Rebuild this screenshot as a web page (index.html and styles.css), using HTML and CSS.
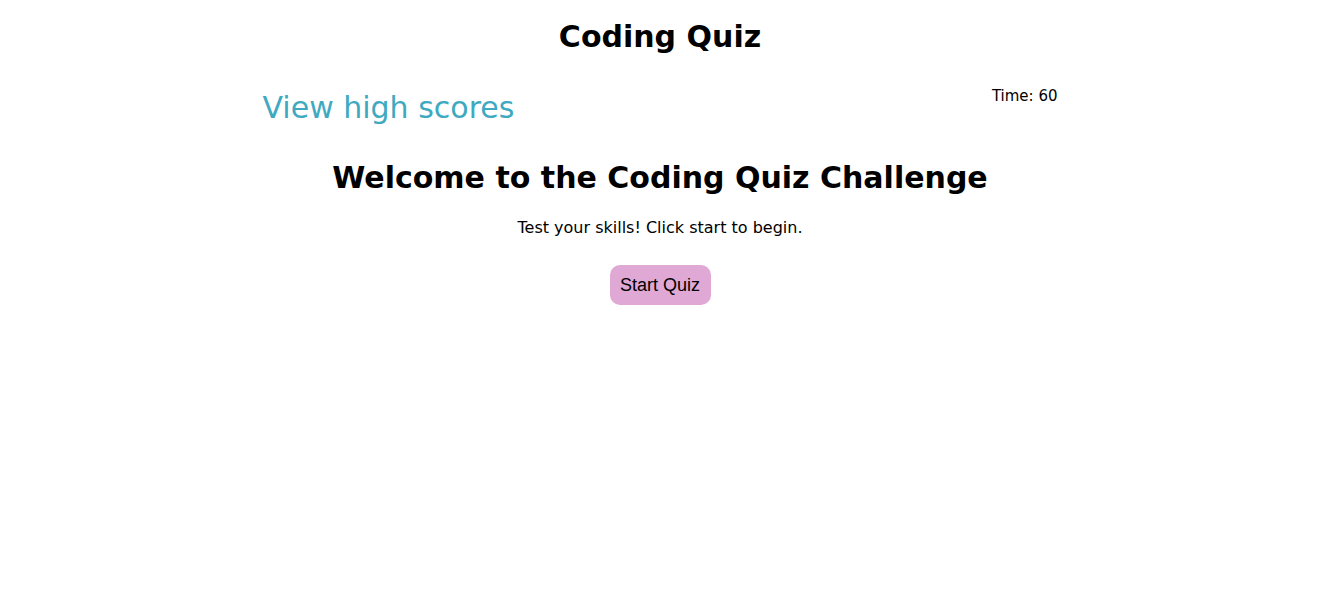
FILE: index.html
```html
<!DOCTYPE html>
<html lang="en">
<head>
<meta charset="utf-8">
<title>Coding Quiz</title>
<link rel="stylesheet" href="styles.css">
</head>
<body>
<h1 class="title">Coding Quiz</h1>
<header class="topbar">
  <a class="scores-link" href="#">View high scores</a>
  <div class="timer">Time: <span>60</span></div>
</header>
<main class="intro">
  <h2 class="intro-title">Welcome to the Coding Quiz Challenge</h2>
  <p class="intro-text">Test your skills! Click start to begin.</p>
  <button class="start-btn" type="button">Start Quiz</button>
</main>
</body>
</html>
```
FILE: styles.css
```css
body {
  margin: 0;
  font-family: "DejaVu Sans", Verdana, sans-serif;
  color: #000;
  background: #fff;
}
.title {
  margin: 0;
  padding-top: 19px;
  text-align: center;
  font-size: 30px;
  font-weight: bold;
  line-height: 36px;
}
.topbar {
  width: 795px;
  margin: 26px auto 0;
  display: flex;
  justify-content: space-between;
  align-items: flex-start;
}
.scores-link {
  color: #3fa9c1;
  text-decoration: none;
  font-size: 30px;
  line-height: 36px;
  padding-top: 9px;
}
.timer {
  font-size: 15px;
  line-height: 18px;
  padding-top: 6px;
}
.intro {
  text-align: center;
}
.intro-title {
  margin: 34px 0 0;
  font-size: 30px;
  line-height: 36px;
}
.intro-text {
  margin: 22px 0 0;
  font-size: 16px;
  line-height: 20px;
}
.start-btn {
  margin-top: 27px;
  width: 101px;
  height: 40px;
  border: none;
  border-radius: 10px;
  background: #e0a8d4;
  font-family: "Liberation Sans", Arial, sans-serif;
  font-size: 18px;
  color: #000;
  padding: 0;
}
```
